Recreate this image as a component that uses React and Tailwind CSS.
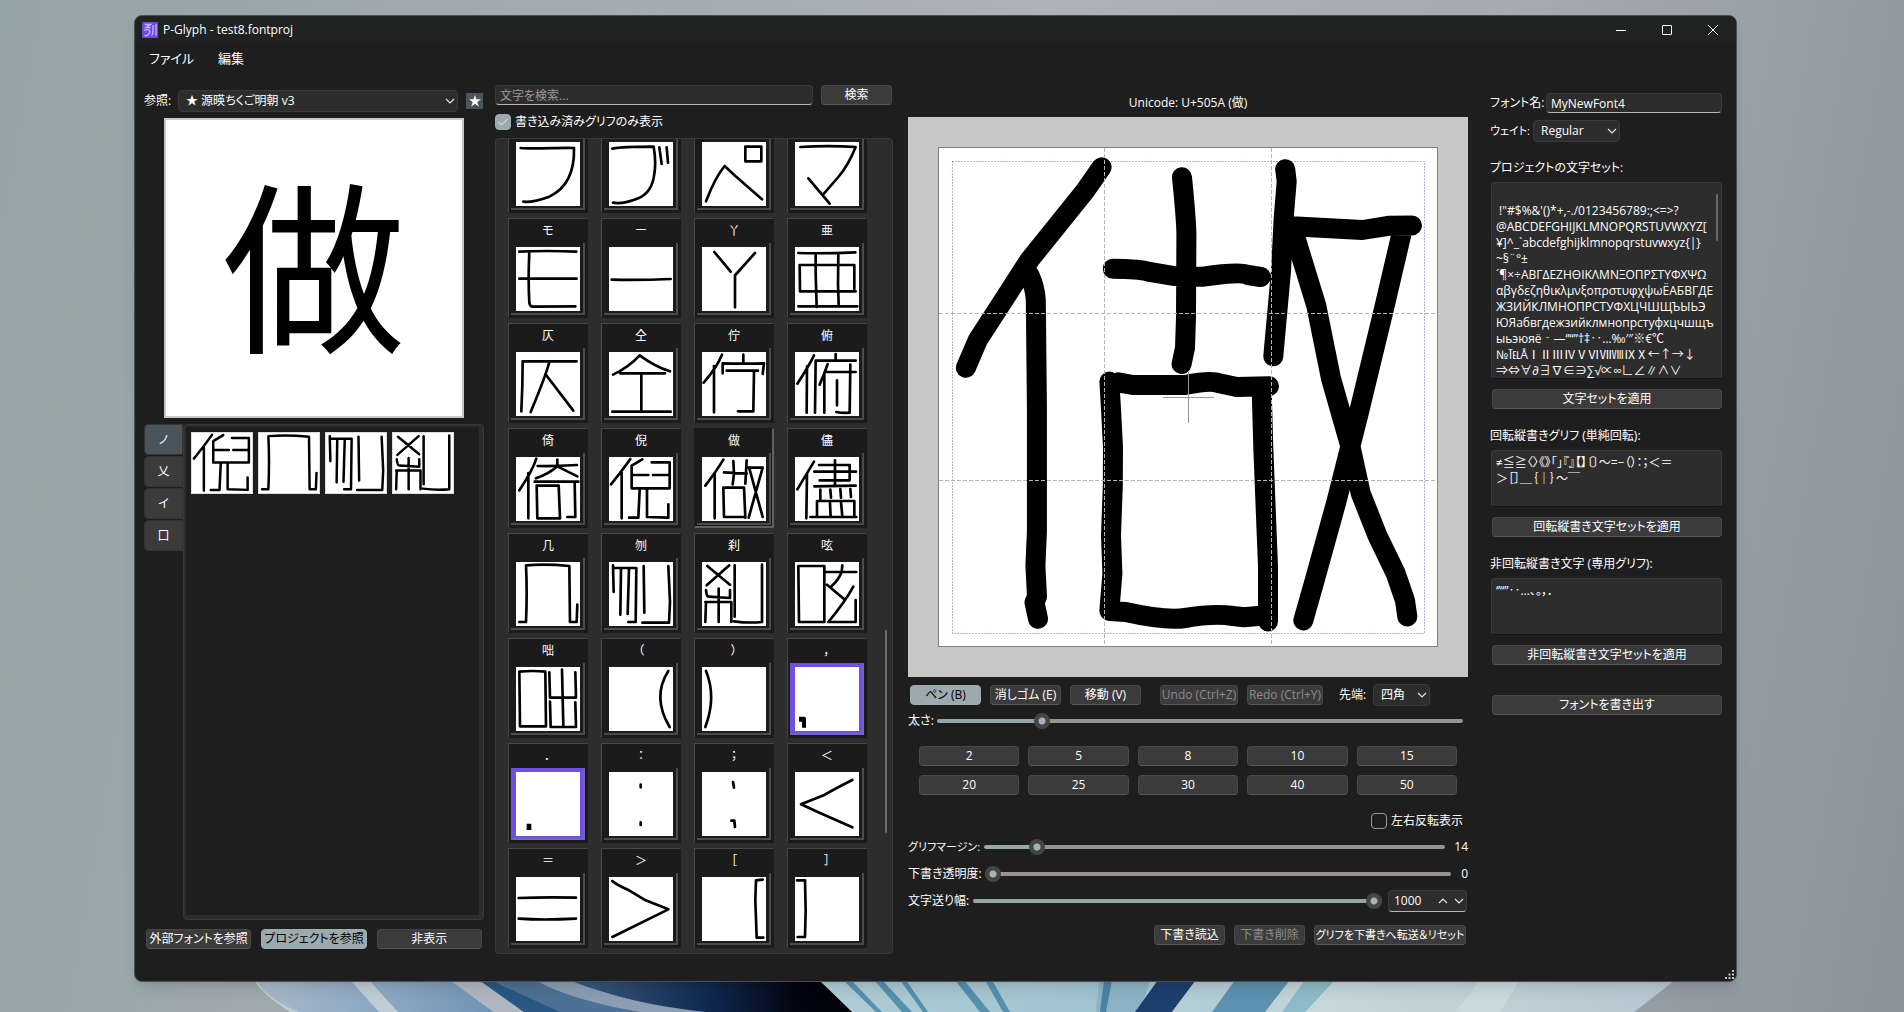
import { useState } from "react";

const THUMBS = {
  fu: "M14 18C60 22 130 16 174 18C176 90 150 140 100 164Q50 182 22 179",
  bu: "M10 20Q40 14 134 14Q142 60 136 95Q130 150 90 168Q40 188 12 182M151 16L158 66M173 16L177 62",
  pe: "M130 14H178V58H130ZM12 178Q40 105 68 72L100 102L180 172",
  ma: "M16 15Q100 10 182 15Q160 70 130 105L84 158M40 109L104 185",
  mo: "M10 14Q90 10 181 14M10 95H182M40 14Q36 100 40 168Q42 180 52 179L178 178",
  one: "M8 98Q90 100 185 96",
  fork: "M37 15L86 74M159 18L100 84M99 84V181",
  a: "M10 18Q90 20 181 16M14 54H178V126M14 54L15 133H182M62 20L62 80L65 180M130 20L129 110L131 172M10 178H187",
  soku: "M182 28H20Q20 100 16 178M100 30Q90 70 44 180M88 66L172 176",
  dou: "M12 68Q60 45 92 10Q140 45 183 58M34 64H168M97 66V180M10 179H185",
  cho: "M60 8Q45 45 5 92M36 42V181M124 8V34M62 64V34Q125 36 186 34L182 66M74 56H168M156 58L154 178H108",
  fu2: "M57 10Q40 45 7 95M36 44L35 182M122 6V26M182 26H62L60 182M98 36Q90 60 74 98M88 66L88 182M96 60H182M126 85L126 160M166 38L164 182Q145 184 124 180",
  ki: "M61 5Q50 40 10 100M37 48V184M124 8V26M65 27Q120 28 183 24M124 28Q100 50 60 64M124 28L184 58M56 74H187M62 86H128L132 182M62 86L64 184H132M176 78L178 180H154",
  gei: "M64 6Q40 40 6 82M38 46L38 184M100 7L68 26V94M68 54H118M132 54H178M128 16H182V94H68M92 98L88 182H60M114 98V180L178 182V142",
  saku: "M64 8Q45 40 10 86M38 50V184M94 12L96 50L92 82M66 46L134 50M134 10L130 80M64 92H126L130 182M64 92L66 180H130M140 32H182L140 182M142 34L182 180",
  jin: "M57 14L7 97M36 50L34 184M72 24H164V70H74M58 44H183M120 10V84M58 88L182 86M76 98V125M106 98L108 122M136 96L138 122M166 96L168 120M66 180V132H178V180M105 138L107 180M138 136L142 178M46 180H184",
  ki2: "M10 180H30Q34 90 30 10Q90 5 160 12L162 180H182L184 128",
  fun: "M12 10L14 90M12 18H82L80 180H58M36 20L34 158M60 20L56 156M104 12L106 152M178 12L183 120L180 182H100",
  setsu: "M16 12L84 68M82 10L14 70M12 84Q14 104 20 104L84 108V84M10 120H88V180M12 120L10 180M50 80V180M98 10V164M180 8V180Q140 184 96 178",
  gen: "M10 12H88V180H12ZM94 30H184M142 10L140 30Q130 55 108 74M96 68L148 112M175 74Q150 120 100 180H182V114",
  totsu: "M10 14Q50 10 88 14L90 178H12ZM100 16L102 92H180L178 16M138 8L142 178M102 104L104 180H180L178 106",
  lpar: "M178 12Q128 90 182 180",
  rpar: "M12 12Q44 90 10 180",
  comma: "M18 155H27V176M18 158H27",
  dot: "M38 161V168M40 161V168",
  colon: "M95 38V46M95 151V159",
  semi: "M93 30L96 47M88 146H97L99 165",
  lt: "M172 24Q120 50 86 70L18 97L80 125L172 166",
  eq: "M8 63Q90 60 180 62M8 125Q80 130 180 125",
  gt: "M10 12Q20 22 60 40L110 70L178 97L10 180",
  lbr: "M182 8L162 10L160 70L164 182H184",
  rbr: "M6 10H30L32 100L30 180H8",
};

const CARDS = [
  { art: "fu" },
  { art: "bu" },
  { art: "pe" },
  { art: "ma" },
  { label: "モ", art: "mo" },
  { label: "ー", art: "one" },
  { label: "丫", art: "fork" },
  { label: "亜", art: "a" },
  { label: "仄", art: "soku" },
  { label: "仝", art: "dou" },
  { label: "佇", art: "cho" },
  { label: "俯", art: "fu2" },
  { label: "倚", art: "ki" },
  { label: "倪", art: "gei" },
  { label: "做", art: "saku", active: true },
  { label: "儘", art: "jin" },
  { label: "几", art: "ki2" },
  { label: "刎", art: "fun" },
  { label: "刹", art: "setsu" },
  { label: "呟", art: "gen" },
  { label: "咄", art: "totsu" },
  { label: "（", art: "lpar" },
  { label: "）", art: "rpar" },
  { label: "，", art: "comma", marked: true, thick: true },
  { label: "．", art: "dot", marked: true, thick: true },
  { label: "：", art: "colon" },
  { label: "；", art: "semi" },
  { label: "＜", art: "lt" },
  { label: "＝", art: "eq" },
  { label: "＞", art: "gt" },
  { label: "［", art: "lbr" },
  { label: "］", art: "rbr" },
  {},
  {},
  {},
  {},
];

const CANVAS_STROKES =
  "M193.6 50.3L177 74L121.5 143L103 171.6L69.7 223.2L57.9 250.8" +
  "M121.5 158.2Q127 170 127.8 183L128.9 288.3V414.6L127.4 449L129 479.6L126.5 485.4L130 501.8" +
  "M274 60.2Q278 100 278.4 116L278 200.3L277 230.9L273.6 247" +
  "M204.8 151.7Q232.5 152 240 154.6L265.8 159L295.4 159.7Q332.4 154 340 158L352.8 160" +
  "M201.4 264.6L203 292.1L205 330.4L204.8 368.7L203 418.4L204.4 456.7L201.4 493" +
  "M210.3 265.3L225 268H277Q302.8 263 310 266L328.7 270L361 269.2" +
  "M353.9 280.6L355.3 330.4L358.3 407L360 449V504.5" +
  "M201.4 494L217.7 495Q258 504 277 501Q306 496 325 499L336 500.3L352.8 498.8" +
  "M377.2 52.2L378.7 64.4L375.7 100.8L373 154.4L366.4 227L365.3 239.3" +
  "M384.2 109.2L454.5 113L480.4 108.8L504 108.4" +
  "M493.7 116L476.7 188.8L450.8 296L428.6 384L406.4 464.3L395.3 503.4" +
  "M386 116L408.3 188.8L423 261.5L442.7 330.4L452.7 376.3L469.3 418.4L487.8 456.7L497 483.5L499.3 499.5";

const CHARSET = [
  "",
  " !\"#$%&'()*+,-./0123456789:;<=>?",
  "@ABCDEFGHIJKLMNOPQRSTUVWXYZ[",
  "¥]^_`abcdefghijklmnopqrstuvwxyz{|}",
  "~§¨°±",
  "´¶×÷ΑΒΓΔΕΖΗΘΙΚΛΜΝΞΟΠΡΣΤΥΦΧΨΩ",
  "αβγδεζηθικλμνξοπρστυφχψωЁАБВГДЕ",
  "ЖЗИЙКЛМНОПРСТУФХЦЧШЩЪЫЬЭ",
  "ЮЯабвгдежзийклмнопрстуфхцчшщъ",
  "ыьэюяё‐―‘’“”†‡‥…‰′″※€℃",
  "№℡ÅⅠⅡⅢⅣⅤⅥⅦⅧⅨⅩ←↑→↓",
  "⇒⇔∀∂∃∇∈∋∑√∝∞∟∠∥∧∨",
].join("\n");

const ROTATED = "≠≦≧〈〉《》「」『』【】〔〕～=−（）：；＜＝\n＞［］＿｛｜｝～￣";
const UPRIGHT = "‘’“”‥…、。，．";

const BTN =
  "flex h-5 items-center justify-center whitespace-nowrap rounded border border-[#484848] border-b-[#585858] bg-[#3b3b3b] text-white disabled:text-[#8c8c8c]";
const BTN_ON =
  "flex h-5 items-center justify-center whitespace-nowrap rounded border border-[#9fadb1] bg-[#9caaae] text-black";
const FIELD = "rounded border border-[#3a3a3a] bg-[#2d2d2d] text-white outline-none";

function Chevron({ up = false }) {
  return (
    <svg width="10" height="6" viewBox="0 0 10 6" fill="none" stroke="#e4e4e4" strokeWidth="1.2" aria-hidden="true">
      <path d={up ? "M1 5L5 1L9 5" : "M1 1L5 5L9 1"} />
    </svg>
  );
}

function Dropdown({ id, options, className }) {
  return (
    <div className={"relative h-[22px] " + className}>
      <select id={id} className={FIELD + " h-full w-full appearance-none pl-[7px] pr-5"}>
        {options.map((o) => (
          <option key={o}>{o}</option>
        ))}
      </select>
      <span className="pointer-events-none absolute inset-y-0 right-[3px] flex items-center">
        <Chevron />
      </span>
    </div>
  );
}

function Thumb({ art, className, thick }) {
  return (
    <svg viewBox="0 0 192 192" className={"block bg-white " + className} aria-hidden="true">
      {art && (
        <path
          d={THUMBS[art]}
          fill="none"
          stroke="#000"
          strokeWidth={thick ? 12 : 8}
          strokeLinecap={thick ? "square" : "round"}
          strokeLinejoin="round"
        />
      )}
    </svg>
  );
}

function GlyphCard({ label, art, active, marked, thick }) {
  return (
    <div
      className={
        "h-[100px] w-20 border bg-[#1b1b1b] pl-[2px] " +
        (active
          ? "border-b-2 border-r-2 border-[#1b1b1b] border-b-[#616161] border-r-[#616161]"
          : "border-b-[#1b1b1b] border-l-[#484848] border-r-[#1b1b1b] border-t-[#484848]")
      }
    >
      <div className="h-6 w-[74px] text-center text-xs leading-6 text-white">{label}</div>
      <button
        type="button"
        aria-label={label || "グリフ"}
        className={
          "block w-[74px] border-b-2 border-r-2 pb-[2px] pl-[5px] pr-[3px] pt-1 " +
          (marked ? "border-[#7565b4] bg-[#6f4fe6]" : "border-[#4b4b4b] bg-[#1b1b1b]")
        }
      >
        <Thumb art={art} thick={thick} className="size-16" />
      </button>
    </div>
  );
}

function Slider({ id, value, max, onChange }) {
  const pct = (value / max) * 100;
  return (
    <input
      id={id}
      type="range"
      min="0"
      max={max}
      value={value}
      onChange={(e) => onChange(Number(e.target.value))}
      style={{ backgroundImage: `linear-gradient(to right, #96a7aa ${pct}%, #999494 ${pct}%)` }}
      className="h-1 min-w-0 flex-1 appearance-none rounded-sm outline-none [&::-webkit-slider-thumb]:size-4 [&::-webkit-slider-thumb]:appearance-none [&::-webkit-slider-thumb]:rounded-full [&::-webkit-slider-thumb]:bg-[radial-gradient(circle,#a3b3b7_0_3px,#454545_4px)]"
    />
  );
}

function Wallpaper() {
  return (
    <svg
      className="absolute bottom-0 left-0 h-8 w-full"
      viewBox="0 0 1904 32"
      preserveAspectRatio="none"
      aria-hidden="true"
    >
      <defs>
        <linearGradient id="petal" x1="0" x2="1">
          <stop offset="0" stopColor="#a9bac8" />
          <stop offset="1" stopColor="#8ba6c2" />
        </linearGradient>
        <linearGradient id="petal2" x1="0" x2="1">
          <stop offset="0" stopColor="#91abc4" />
          <stop offset="1" stopColor="#6f93b5" />
        </linearGradient>
        <linearGradient id="deep" x1="0" x2="1">
          <stop offset="0" stopColor="#3c5f86" />
          <stop offset="0.5" stopColor="#10284f" />
          <stop offset="0.8" stopColor="#040512" />
          <stop offset="1" stopColor="#020208" />
        </linearGradient>
        <linearGradient id="fan" x1="0" x2="1">
          <stop offset="0" stopColor="#93bccb" />
          <stop offset="0.3" stopColor="#b9d0d7" />
          <stop offset="0.6" stopColor="#9fc3d0" />
          <stop offset="0.75" stopColor="#c6d8db" />
          <stop offset="1" stopColor="#b7c7d2" />
        </linearGradient>
      </defs>
      <path d="M257 0H1675Q1655 16 1634 32H299Q265 16 257 0Z" fill="url(#fan)" />
      <path d="M257 0H350L379 32H299Q265 16 257 0Z" fill="url(#petal)" />
      <path d="M257 0Q266 18 299 32H290Q262 14 254 0Z" fill="#bccad3" />
      <path d="M350 0H369L398 32H379Z" fill="#bfccd6" />
      <path d="M369 0H450L494 32H398Z" fill="url(#petal2)" />
      <path d="M450 0H479L524 32H494Z" fill="#b0b7c2" />
      <path d="M479 0H545L690 32H524Z" fill="#4d7194" />
      <path d="M479 0H490L560 32H524Z" fill="#285784" />
      <path d="M535 0H568Q630 24 705 32H640Q570 20 535 0Z" fill="#8b9eb3" />
      <path d="M568 0H819L852 32H705Q630 24 568 0Z" fill="url(#deep)" />
      <path d="M843 0L876 32H882L851 0ZM874 0L902 32H912L882 0ZM900 0L923 32H928L906 0ZM955 0L980 32H990L964 0ZM985 0L1003 32H1010L992 0Z" fill="#5590af" />
      <path d="M1099 0L1096 32H1140L1150 0Z" fill="#8bb3c4" />
      <path d="M1104 0L1100 32H1106L1112 0Z" fill="#4a83a5" />
      <path d="M1158 0L1135 32H1172L1196 0Z" fill="#1c3f6e" />
      <path d="M1196 0L1172 32H1198L1228 0Z" fill="#b4ced6" />
      <path d="M1235 0L1212 32H1265L1290 0Z" fill="#5d91b0" />
      <path d="M1305 0L1282 32H1305L1335 0Z" fill="#8fbac8" />
      <path d="M1480 0L1455 32H1500L1520 0Z" fill="#c9dadd" />
    </svg>
  );
}

function TitleBar() {
  const control = "flex h-full w-[46px] items-center justify-center text-white";
  return (
    <header className="flex h-[27px] items-center bg-[#202222] pl-[7px]">
      <svg width="16" height="16" viewBox="0 0 16 16" fill="none" aria-hidden="true">
        <rect width="16" height="16" rx="1" fill="#6a4be0" />
        <path d="M2.500 2.500H8.500L4 5.500H8.500M2 8.500C6 6.500 9 8 7.500 11C6.500 13 4.500 14 2.500 13.500M11 3V9.500Q11 12 9.500 13.500M14 2V13.500" stroke="#c9bcff" strokeWidth="1.300" />
      </svg>
      <h1 className="ml-[5px] flex-1 text-xs text-white">P-Glyph - test8.fontproj</h1>
      <button type="button" aria-label="最小化" className={control}>
        <svg width="10" height="10" viewBox="0 0 10 10" stroke="currentColor">
          <path d="M0 5.500H10" />
        </svg>
      </button>
      <button type="button" aria-label="最大化" className={control}>
        <svg width="10" height="10" viewBox="0 0 10 10" fill="none" stroke="currentColor">
          <rect x="0.500" y="0.500" width="9" height="9" rx="0.500" />
        </svg>
      </button>
      <button type="button" aria-label="閉じる" className={control}>
        <svg width="10" height="10" viewBox="0 0 10 10" stroke="currentColor">
          <path d="M0 0L10 10M10 0L0 10" />
        </svg>
      </button>
    </header>
  );
}

function ReferencePanel() {
  const tab = "flex h-[31px] items-center justify-center rounded-l border border-[#333] text-white";
  return (
    <section className="flex w-[340px] shrink-0 flex-col pt-[13px]">
      <div className="flex items-center">
        <label htmlFor="ref-font" className="w-[34px] whitespace-nowrap">参照:</label>
        <Dropdown id="ref-font" options={["★ 源暎ちくご明朝 v3"]} className="w-[280px]" />
        <button type="button" aria-label="お気に入り" className="ml-2 flex h-4 w-[17px] items-center justify-center bg-[#4a545b] text-white">
          <svg width="12" height="12" viewBox="0 0 12 12" fill="currentColor" aria-hidden="true">
            <path d="M6 0L7.400 4.300H12L8.300 7L9.700 11.500L6 8.800L2.300 11.500L3.700 7L0 4.300H4.600Z" />
          </svg>
        </button>
      </div>
      <div className="ml-5 mt-[6px] flex size-[300px] items-center justify-center border-2 border-[#c8c8c8] bg-white text-[184px] leading-none text-black">
        做
      </div>
      <div className="mt-[6px] flex flex-1">
        <div className="flex w-[39px] flex-col gap-px">
          <button type="button" className={tab + " bg-[#4a545b]"}>ノ</button>
          <button type="button" className={tab + " bg-[#3b3b3b]"}>乂</button>
          <button type="button" className={tab + " bg-[#3b3b3b]"}>イ</button>
          <button type="button" className={tab + " bg-[#3b3b3b]"}>口</button>
        </div>
        <div className="flex flex-1 rounded border border-[#3a3a3a] bg-[#2d2d2d] pb-1 pl-[2px] pr-1 pt-[2px]">
          <div className="flex flex-1 items-start gap-[5px] bg-[#1e1e1e] px-[5px] py-[5px]">
            {["gei", "ki2", "fun", "setsu"].map((k) => (
              <Thumb key={k} art={k} className="size-[62px] border border-[#dcdcdc]" />
            ))}
          </div>
        </div>
      </div>
      <div className="mb-8 mt-[9px] grid grid-cols-3 gap-[10px] px-[2px]">
        <button type="button" className={BTN}>外部フォントを参照</button>
        <button type="button" className={BTN_ON}>プロジェクトを参照</button>
        <button type="button" className={BTN}>非表示</button>
      </div>
    </section>
  );
}

function GlyphList() {
  const [only, setOnly] = useState(true);
  return (
    <section className="flex w-[398px] shrink-0 flex-col pt-2">
      <div className="flex gap-2 pr-px">
        <input
          type="text"
          aria-label="文字を検索"
          placeholder="文字を検索..."
          className={FIELD + " h-5 min-w-0 flex-1 border-b-[#b5b5b5] px-1 placeholder:text-[#9a9a9a]"}
        />
        <button type="button" className={BTN + " w-[71px]"}>検索</button>
      </div>
      <label className="mt-[9px] flex h-4 items-center gap-1">
        <span className="relative flex size-4 items-center justify-center">
          <input
            type="checkbox"
            checked={only}
            onChange={(e) => setOnly(e.target.checked)}
            className="peer absolute inset-0 appearance-none rounded border border-[#9a9a9a] checked:border-[#9caaae] checked:bg-[#9caaae]"
          />
          <svg width="10" height="8" viewBox="0 0 10 8" fill="none" stroke="#e8eef0" className="pointer-events-none relative hidden peer-checked:block" aria-hidden="true">
            <path d="M0.500 4L3.500 7L9.500 1" />
          </svg>
        </span>
        書き込み済みグリフのみ表示
      </label>
      <div className="relative mt-2 h-[816px] overflow-hidden rounded border border-[#3a3a3a] bg-[#2d2d2d] pl-3">
        <div className="-mt-[26px] grid grid-cols-[repeat(4,80px)] gap-x-[13px] gap-y-[5px]">
          {CARDS.map((c, i) => (
            <GlyphCard key={i} {...c} />
          ))}
        </div>
        <div className="absolute right-[5px] top-[491px] h-[203px] w-[2px] rounded bg-[#6b6b6b]" />
      </div>
    </section>
  );
}

function Editor() {
  const [size, setSize] = useState(19);
  const [margin, setMargin] = useState(14);
  const [opacity, setOpacity] = useState(0);
  const [advance, setAdvance] = useState(1000);
  return (
    <section className="flex min-w-0 flex-1 flex-col pt-4">
      <h2 className="h-6 text-center leading-5 text-white">Unicode: U+505A (做)</h2>
      <svg viewBox="0 0 560 560" className="block w-full bg-[#c8c8c8]" role="img" aria-label="做">
        <rect x="30.500" y="30.500" width="499" height="499" fill="#fff" stroke="#808080" />
        <rect x="44.500" y="44.500" width="472" height="472" fill="none" stroke="#6a5acd" strokeDasharray="1 2" />
        <path d={CANVAS_STROKES} fill="none" stroke="#000" strokeWidth="20" strokeLinecap="round" strokeLinejoin="round" />
        <path d="M196.500 31V529M363.500 31V529M31 196.500H529M31 363.500H529" stroke="#b4b4b4" strokeDasharray="4 2" />
        <path d="M280.500 255V306M255 280.500H306" stroke="#969696" />
      </svg>
      <div className="mt-[7px] flex items-center pl-[2px]">
        <button type="button" className={BTN_ON + " w-[71px]"}>ペン (B)</button>
        <button type="button" className={BTN + " ml-[9px] w-[71px]"}>消しゴム (E)</button>
        <button type="button" className={BTN + " ml-[9px] w-[71px]"}>移動 (V)</button>
        <button type="button" disabled className={BTN + " ml-[19px] w-[78px]"}>Undo (Ctrl+Z)</button>
        <button type="button" disabled className={BTN + " ml-[9px] w-[76px]"}>Redo (Ctrl+Y)</button>
        <label htmlFor="tip" className="ml-4 w-[34px] whitespace-nowrap">先端:</label>
        <Dropdown id="tip" options={["四角", "丸"]} className="w-[57px]" />
      </div>
      <div className="mt-[6px] flex h-[18px] items-center pr-[5px]">
        <label htmlFor="size" className="w-[29px] whitespace-nowrap">太さ:</label>
        <Slider id="size" value={size} max={100} onChange={setSize} />
      </div>
      <div className="mt-4 grid grid-cols-5 gap-[9px] px-[11px]">
        {[2, 5, 8, 10, 15, 20, 25, 30, 40, 50].map((n) => (
          <button key={n} type="button" className={BTN} onClick={() => setSize(n)}>{n}</button>
        ))}
      </div>
      <label className="mt-[18px] flex h-4 items-center gap-1 self-end pr-[5px]">
        <input type="checkbox" className="size-4 appearance-none rounded border border-[#9a9a9a] checked:bg-[#9caaae]" />
        左右反転表示
      </label>
      <div className="mt-[9px] flex h-[18px] items-center">
        <label htmlFor="margin" className="w-[76px] whitespace-nowrap text-[11px]">グリフマージン:</label>
        <Slider id="margin" value={margin} max={140} onChange={setMargin} />
        <output className="w-[23px] text-right">{margin}</output>
      </div>
      <div className="mt-[9px] flex h-[18px] items-center">
        <label htmlFor="opacity" className="w-[77px] whitespace-nowrap">下書き透明度:</label>
        <Slider id="opacity" value={opacity} max={100} onChange={setOpacity} />
        <output className="w-[17px] text-right">{opacity}</output>
      </div>
      <div className="mt-[7px] flex h-[22px] items-center">
        <label htmlFor="advance" className="w-[65px] whitespace-nowrap">文字送り幅:</label>
        <Slider id="advance" value={advance} max={1000} onChange={setAdvance} />
        <div className={FIELD + " ml-[6px] mr-px flex h-[22px] w-[79px] items-center border-b-[#b5b5b5]"}>
          <input
            type="text"
            aria-label="文字送り幅"
            value={advance}
            onChange={(e) => setAdvance(Number(e.target.value) || 0)}
            className="w-[49px] bg-transparent pl-[5px] outline-none"
          />
          <button type="button" aria-label="増やす"><Chevron up /></button>
          <button type="button" aria-label="減らす" className="ml-[6px]"><Chevron /></button>
        </div>
      </div>
      <div className="mt-[13px] flex justify-end gap-[9px] pr-[2px]">
        <button type="button" className={BTN + " w-[71px]"}>下書き読込</button>
        <button type="button" disabled className={BTN + " w-[71px]"}>下書き削除</button>
        <button type="button" className={BTN + " w-[152px] text-[11px]"}>グリフを下書きへ転送＆リセット</button>
      </div>
    </section>
  );
}

function ProjectPanel() {
  const area = FIELD + " block w-full resize-none overflow-hidden whitespace-pre border-b-[#161616] px-1 py-1 leading-4";
  return (
    <section className="flex w-[232px] shrink-0 flex-col pt-4">
      <div className="flex items-center">
        <label htmlFor="font-name" className="w-14 whitespace-nowrap">フォント名:</label>
        <input id="font-name" type="text" defaultValue="MyNewFont4" className={FIELD + " h-5 min-w-0 flex-1 border-b-[#b5b5b5] px-1"} />
      </div>
      <div className="mt-[7px] flex items-center">
        <label htmlFor="weight" className="w-[43px] whitespace-nowrap text-[11px]">ウェイト:</label>
        <Dropdown id="weight" options={["Regular", "Bold"]} className="w-[87px]" />
      </div>
      <label htmlFor="charset" className="mt-[17px] leading-[18px]">プロジェクトの文字セット:</label>
      <div className="relative mt-[5px] pl-px">
        <textarea id="charset" defaultValue={CHARSET} className={area + " h-[197px] [font-feature-settings:normal]"} />
        <div className="absolute right-1 top-3 h-[47px] w-[2px] rounded bg-[#6b6b6b]" />
      </div>
      <button type="button" className={BTN + " ml-[2px] mt-[10px]"}>文字セットを適用</button>
      <label htmlFor="rotated" className="mt-[18px] leading-[18px]">回転縦書きグリフ (単純回転):</label>
      <div className="mt-[5px] pl-px">
        <textarea id="rotated" defaultValue={ROTATED} className={area + " h-[57px]"} />
      </div>
      <button type="button" className={BTN + " ml-[2px] mt-[10px]"}>回転縦書き文字セットを適用</button>
      <label htmlFor="upright" className="mt-[18px] leading-[18px]">非回転縦書き文字 (専用グリフ):</label>
      <div className="mt-[5px] pl-px">
        <textarea id="upright" defaultValue={UPRIGHT} className={area + " h-[57px]"} />
      </div>
      <button type="button" className={BTN + " ml-[2px] mt-[10px]"}>非回転縦書き文字セットを適用</button>
      <button type="button" className={BTN + " ml-[2px] mt-[30px]"}>フォントを書き出す</button>
    </section>
  );
}

export default function App() {
  return (
    <div className="relative flex min-h-screen flex-col bg-[linear-gradient(100deg,#94a3a3_0%,#9da9ab_18%,#abb2b8_50%,#a4abb2_72%,#8b939a_100%)] pb-[30px] pl-[134px] pr-[167px] pt-[15px] font-['Open_Sans','Noto_Sans_CJK_JP',sans-serif] text-xs [font-feature-settings:'palt'] text-white">
      <Wallpaper />
      <div className="relative flex flex-1 flex-col overflow-hidden rounded-lg border border-[#4c5052] bg-[#1e1e1e] shadow-lg">
        <TitleBar />
        <nav className="flex h-8 items-center gap-6 px-[14px] text-[13px]">
          <button type="button">ファイル</button>
          <button type="button">編集</button>
        </nav>
        <main className="flex flex-1 pl-[9px] pr-[14px] pt-[2px]">
          <ReferencePanel />
          <div className="w-[11px] shrink-0" />
          <GlyphList />
          <div className="w-[15px] shrink-0" />
          <Editor />
          <div className="w-[22px] shrink-0" />
          <ProjectPanel />
        </main>
        <svg className="absolute bottom-[2px] right-[2px]" width="9" height="9" viewBox="0 0 9 9" fill="#c4c4c4" aria-hidden="true">
          <path d="M7 0H9V2H7ZM7 3.500H9V5.500H7ZM3.500 3.500H5.500V5.500H3.500ZM7 7H9V9H7ZM3.500 7H5.500V9H3.500ZM0 7H2V9H0Z" />
        </svg>
      </div>
    </div>
  );
}
